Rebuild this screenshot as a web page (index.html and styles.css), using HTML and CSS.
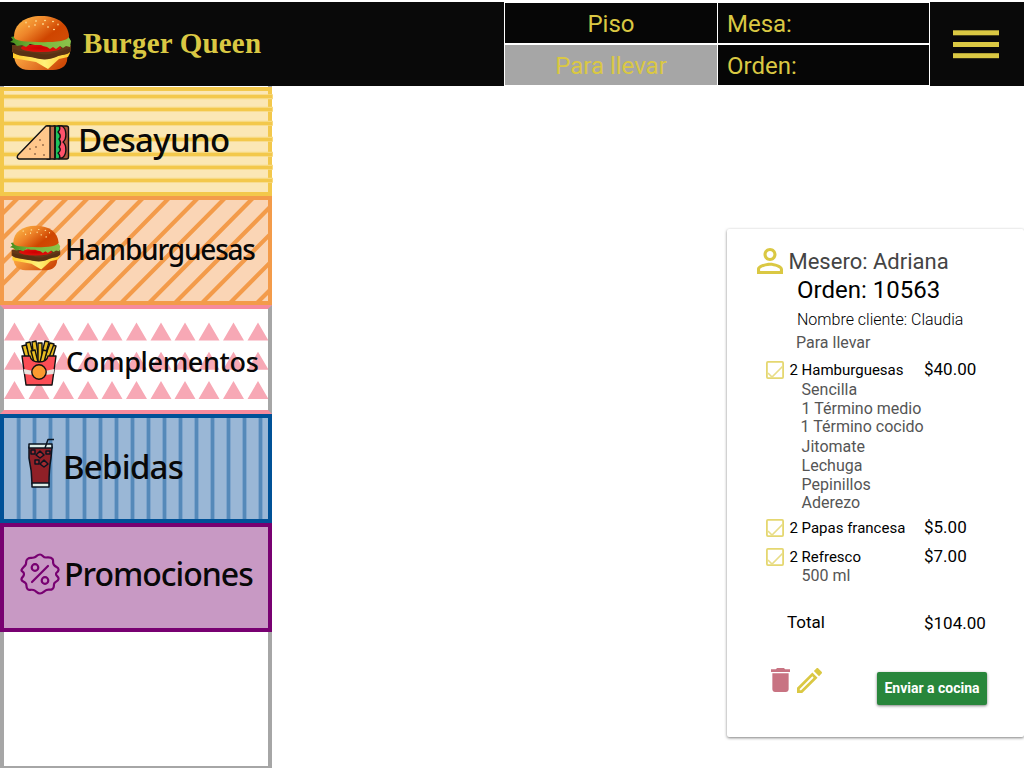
FILE: index.html
```html
<!DOCTYPE html>
<html lang="es">
<head>
<meta charset="utf-8">
<title>Burger Queen</title>
<link rel="stylesheet" href="styles.css">
</head>
<body>
<svg width="0" height="0" class="defs">
  <defs>
    <linearGradient id="bun" x1="0" y1="0" x2="1" y2="0.6"><stop offset="0" stop-color="#ffc04a"/><stop offset="0.45" stop-color="#ee852a"/><stop offset="0.8" stop-color="#cf4500"/><stop offset="1" stop-color="#d14a04"/></linearGradient>
    <linearGradient id="base" x1="0" y1="0" x2="1" y2="0.3"><stop offset="0" stop-color="#ffad43"/><stop offset="0.5" stop-color="#e8802c"/><stop offset="1" stop-color="#cf4b08"/></linearGradient>
    <linearGradient id="leaf"><stop offset="0" stop-color="#438b1c"/><stop offset="0.4" stop-color="#78b63a"/><stop offset="1" stop-color="#8bc34a"/></linearGradient>
    <radialGradient id="tomato"><stop offset="0" stop-color="#cc0000"/><stop offset="1" stop-color="#e0120c"/></radialGradient>
    <linearGradient id="cheese"><stop offset="0" stop-color="#ffc928"/><stop offset="0.55" stop-color="#fff17a"/><stop offset="1" stop-color="#ffc928"/></linearGradient>
    <symbol id="burger" viewBox="0 0 62 54">
      <path fill="url(#base)" d="M4 38H57C59 49 52 54 43 54H19C9 54 4 48 4 38Z"/>
      <path fill="url(#cheese)" d="M3 35L59 34L60 37L58 41L49 43L38 53L26 46L14 44L3 42Z"/>
      <path fill="#653817" d="M2 29H61V35C57 40 52 38 46 41C39 44 33 44 25 42C17 40 6 40 2 36Z"/>
      <path fill="#4c2b10" opacity=".45" d="M3 33C15 37 25 36 31 38C40 40 51 35 61 32V35C55 40 51 38 46 41C37 44 30 44 23 41C15 40 6 40 3 36Z"/>
      <ellipse cx="31" cy="32" rx="20" ry="4" fill="url(#tomato)"/>
      <path fill="url(#leaf)" d="M6 20L58 20L61 25L60 31L56 30L53 32L50 30L46 33L43 31L40 33L37 31L33 30L31 29L25 29L20 28L16 31L12 29L7 30L4 27L0 26L3 24L1 21Z"/>
      <path fill="url(#bun)" d="M4 21C4 8 15 0 31 0C48 0 58 8 59 20C59 22 56 24 51 25C38 27 22 26 11 25C7 24 4 23 4 21Z"/>
      <g fill="#ffe39a"><ellipse cx="26" cy="5" rx="1" ry=".7"/><ellipse cx="35" cy="4.500" rx="1" ry=".7"/><ellipse cx="25" cy="9" rx=".7" ry="1"/><ellipse cx="33" cy="8" rx=".8" ry="1"/><ellipse cx="43" cy="5.500" rx="1" ry=".7"/><ellipse cx="48" cy="8.500" rx=".7" ry="1"/><ellipse cx="19" cy="10.500" rx=".7" ry="1"/><ellipse cx="38" cy="11" rx="1" ry=".7"/><ellipse cx="44" cy="13.500" rx="1" ry=".7"/><ellipse cx="16" cy="6.500" rx=".7" ry="1"/></g>
    </symbol>
    <symbol id="check" viewBox="0 0 18 18">
      <rect x=".9" y=".9" width="16.200" height="16.200" rx="1" fill="none" stroke="#e5d770" stroke-width="1.800"/>
      <path d="M2 12L6 16L16.500 5.500" fill="none" stroke="#e8dd88" stroke-width="1.600"/>
    </symbol>
  </defs>
</svg>

<header class="topbar">
  <div class="brand">
    <svg class="brand-logo"><use href="#burger"/></svg>
    <span class="brand-name">Burger Queen</span>
  </div>
  <div class="service">
    <div class="cell center">Piso</div>
    <div class="cell">Mesa:</div>
    <div class="cell center selected">Para llevar</div>
    <div class="cell">Orden:</div>
  </div>
  <div class="menu">
    <svg width="46" height="29" viewBox="0 0 46 29" fill="#dac843"><rect y=".3" width="46" height="5"/><rect y="12" width="46" height="5"/><rect y="23.200" width="46" height="5"/></svg>
  </div>
</header>

<main class="content">
  <nav class="sidebar">
    <div class="category breakfast">
      <svg class="pattern" viewBox="0 0 269 101">
        <g stroke="#f7d981" stroke-width="5"><path d="M0 5.700H269M0 18.300H269M0 32.300H269M0 48.300H269M0 63.300H269M0 76.300H269M0 89.300H269"/></g>
        <g stroke="#f3c84b" stroke-width="3"><path d="M0 5.500H268M0 18.500H268M0 32.500H268M0 48.500H268M0 63.500H268M0 76.500H268M0 89.500H268"/></g>
      </svg>
      <svg class="icon sandwich" width="54" height="36" viewBox="0 0 54 36">
        <g stroke="#111" stroke-width="1.400" stroke-linejoin="round">
          <rect x="42" y="1" width="10.500" height="33" rx="2" fill="#a9583b"/>
          <path fill="#ff526b" d="M42 1H46C51 4 51 14 47 17C51 20 51 30 46 33H42Z"/>
          <path fill="#1fc45b" d="M38 1H43Q45 4 42 7Q46 11 43 14Q46 18 43 22Q46 25 42 28Q45 31 43 34H38Z"/>
          <path fill="#b9694b" d="M31 1H39V34H31Z"/>
          <path fill="#ffc78b" d="M30 1H34V34H3Q0 33 2 30Z"/>
        </g>
        <path d="M39 2V33" stroke="#111" stroke-width="1.600"/>
        <g fill="#533221"><circle cx="24" cy="15" r=".8"/><circle cx="20" cy="22" r=".8"/><circle cx="27" cy="20" r=".8"/><circle cx="14" cy="24" r=".8"/><circle cx="19" cy="29" r=".8"/><circle cx="28" cy="30" r=".8"/></g>
      </svg>
      <span class="label">Desayuno</span>
    </div>
    <div class="category burgers">
      <svg class="pattern" viewBox="0 0 269 101">
        <path stroke="#f39b4a" stroke-width="4.200" d="M14-2L-4 16M39-2L-4 41M63-2L-4 65M84-2L-18 101M111-2L9 103M139-2L35 103M165-2L62 103M194-2L90 103M221-2L117 103M249-2L145 103M275-2L171 103M302-2L198 103M330-2L226 103M357-2L253 103"/>
      </svg>
      <svg class="icon burger-icon"><use href="#burger"/></svg>
      <span class="label">Hamburguesas</span>
    </div>
    <div class="category sides">
      <svg class="pattern" viewBox="0 0 269 101" fill="#f7a8b5">
        <defs><path id="row" d="M0 18L10.500 0L21 18ZM24.500 18L35 0L45.500 18ZM49 18L59.500 0L70 18ZM73.500 18L84 0L94.500 18ZM97.500 18L108 0L118.500 18ZM122 18L132.500 0L143 18ZM146.500 18L157 0L167.500 18ZM170.500 18L181 0L191.500 18ZM194.500 18L205 0L215.500 18ZM219 18L229.500 0L240 18ZM243.500 18L254 0L264.500 18Z"/></defs>
        <use href="#row" y="13.500"/><use href="#row" y="42.700"/><use href="#row" y="72"/>
      </svg>
      <svg class="icon fries" width="36" height="46" viewBox="0 0 36 46">
        <g stroke="#111" stroke-width="1.400" stroke-linejoin="round">
          <g fill="#e9bd22">
            <path d="M11 2L15 1L18 20H13Z"/><path d="M24 1L28 2L23 20H19Z"/><path d="M17 3H21V22H17Z"/>
            <path d="M1 6L5 5L11 20H5Z"/><path d="M31 5L35 6L31 20H25Z"/><path d="M5 3L9 2L14 21H9Z"/><path d="M29 3L33 4L27 20H23Z"/>
            <path d="M10 11L14 10L17 22H13Z"/><path d="M22 10L26 11L23 22H19Z"/>
          </g>
          <path fill="#fb4d55" d="M1 16H9Q10 22 18 22Q26 22 27 16H35L31 45H5Z"/>
        </g>
        <path fill="#e9e4df" d="M2.700 29L12 31V35L3.500 34ZM33.300 29L24 31V35L32.500 34Z"/>
        <circle cx="18" cy="32" r="7.200" fill="#fa9a30" stroke="#111" stroke-width="1.400"/>
      </svg>
      <span class="label">Complementos</span>
    </div>
    <div class="category drinks">
      <svg class="pattern" viewBox="0 0 269 101">
        <g stroke="#75a0ca" stroke-width="4.500"><path d="M14.700 0V101M30.500 0V101M46.500 0V101M63.500 0V101M80.500 0V101M96.500 0V101M112.500 0V101M128.500 0V101M144.500 0V101M160.500 0V101M176.500 0V101M192.500 0V101M208.500 0V101M224.500 0V101M240.500 0V101M256.500 0V101"/></g>
        <g stroke="#5589b9" stroke-width="3"><path d="M14.700 0V101M30.500 0V101M46.500 0V101M63.500 0V101M80.500 0V101M96.500 0V101M112.500 0V101M128.500 0V101M144.500 0V101M160.500 0V101M176.500 0V101M192.500 0V101M208.500 0V101M224.500 0V101M240.500 0V101M256.500 0V101"/></g>
      </svg>
      <svg class="icon soda" width="28" height="50" viewBox="0 0 28 50">
        <g stroke="#0b1420" stroke-width="1.500" stroke-linejoin="round">
          <path fill="#8f2027" d="M2 9H25L24 20C22 31 22 39 22 46H5C5 38 4 29 2 20Z"/>
          <path fill="#dfeee8" d="M2 6H25V10H2Z"/><path fill="#dfeee8" d="M5 45H22V49H5Z"/>
          <path fill="none" d="M18 10L21 1.500H27"/>
          <g fill="#a22b30"><path d="M13 13L17 17L13 20L9 17Z"/><path d="M17 22L21 26L17 29L13 26Z"/><path d="M4 12H8V16H4ZM19 13H23V16H19ZM8 22H12V26H8Z"/></g>
        </g>
      </svg>
      <span class="label">Bebidas</span>
    </div>
    <div class="category promos">
      <svg class="icon badge" width="40" height="42" viewBox="0 0 40 42" fill="none" stroke="#780071" stroke-width="2.200" stroke-linecap="round" stroke-linejoin="round">
        <path d="M20 1.500C23 1.500 22.500 4.500 26 4.500S31 4 32.500 6S32 9.500 34 12S39 14 38.500 17S36 18.500 36 21S39 23.500 38.500 26S36 28 34.500 30S35 34.500 32.500 36S29 36 26.500 37S23 40.500 20 40.500S16.500 38 13.500 37S9.500 38 7.500 36S7.500 32 5.500 30S1 28.500 1.500 26S4 24 4 21S1 19 1.500 17S4 14 5.500 12S5 8 7.500 6S11 5.500 14 4.500S17 1.500 20 1.500Z"/>
        <circle cx="15" cy="14.500" r="3.300"/><circle cx="25" cy="27.500" r="3.300"/><path d="M28 13L12 29"/>
      </svg>
      <span class="label">Promociones</span>
    </div>
  </nav>

  <section class="ticket">
    <div class="waiter">
      <svg width="26" height="26" viewBox="4 4 16 16" fill="#dac843"><path d="M12 5.900c1.160 0 2.100.94 2.100 2.100s-.94 2.100-2.100 2.100S9.900 9.160 9.900 8s.94-2.100 2.100-2.100m0 9c2.970 0 6.100 1.460 6.100 2.100v1.100H5.900V17c0-.64 3.130-2.100 6.100-2.100M12 4C9.790 4 8 5.790 8 8s1.790 4 4 4 4-1.790 4-4-1.790-4-4-4zm0 9c-2.670 0-8 1.340-8 4v3h16v-3c0-2.660-5.330-4-8-4z"/></svg>
      <span class="waiter-name">Mesero: Adriana</span>
    </div>
    <div class="order-number">Orden: 10563</div>
    <div class="customer">Nombre cliente: Claudia</div>
    <div class="order-type">Para llevar</div>

    <div class="item"><svg class="check"><use href="#check"/></svg><span class="item-name">2 Hamburguesas</span><span class="price">$40.00</span></div>
    <ul class="details">
      <li>Sencilla</li>
      <li>1 Término medio</li>
      <li class="tight outdent">1 Término cocido</li>
      <li class="loose">Jitomate</li>
      <li>Lechuga</li>
      <li>Pepinillos</li>
      <li class="tight">Aderezo</li>
    </ul>
    <div class="item fries-item"><svg class="check"><use href="#check"/></svg><span class="item-name">2 Papas francesa</span><span class="price">$5.00</span></div>
    <div class="item soda-item"><svg class="check"><use href="#check"/></svg><span class="item-name">2 Refresco</span><span class="price">$7.00</span></div>
    <ul class="details size"><li>500 ml</li></ul>
    <div class="total"><span class="total-label">Total</span><span class="price">$104.00</span></div>
    <div class="actions">
      <svg class="trash" width="19" height="24" viewBox="5 3 14 18" preserveAspectRatio="none" fill="#c87382"><path d="M6 19c0 1.100.9 2 2 2h8c1.100 0 2-.9 2-2V7H6v12zM19 4h-3.500l-1-1h-5l-1 1H5v2h14V4z"/></svg>
      <svg class="pencil" width="25" height="25" viewBox="3 3 18 18" fill="#dac843"><path d="M14.060 9.020l.92.920L5.920 19H5v-.92l9.060-9.060M17.660 3c-.25 0-.51.1-.7.290l-1.830 1.830 3.750 3.750 1.830-1.830c.39-.39.39-1.020 0-1.410l-2.340-2.340c-.2-.2-.45-.29-.71-.29zm-3.600 3.190L3 17.250V21h3.750L17.810 9.940l-3.750-3.750z"/></svg>
      <button class="send">Enviar a cocina</button>
    </div>
  </section>
</main>
</body>
</html>
```
FILE: styles.css
```css
* { box-sizing: border-box; }
body { margin: 0; width: 1024px; height: 768px; overflow: hidden; background: #fff; font-family: Roboto, sans-serif; }
.defs { position: absolute; }

.topbar { display: flex; height: 84px; margin-top: 2px; background: #090909; }
.brand { display: flex; align-items: center; width: 504px; padding: 0 0 2px 10px; }
.brand-logo { width: 62px; height: 54px; }
.brand-name { margin-left: 11px; font: bold 29px "Liberation Serif", serif; letter-spacing: 0.2px; color: #dac843; white-space: nowrap; }
.service { display: grid; grid-template-columns: 212px 211px; grid-template-rows: 40px 40px; gap: 2px 1px; width: 426px; padding: 1px 0 1px 1px; border-right: 1px solid #fff; background: #fff; }
.cell { display: flex; align-items: center; padding: 2px 0 0 9px; background: #060606; color: #dac843; font-size: 24px; }
.center { justify-content: center; padding-left: 0; }
.selected { background: #a6a6a6; }
.menu { display: flex; align-items: center; padding-left: 23px; }

.content { display: flex; height: 682px; }
.sidebar { flex: none; width: 272px; padding-top: 1px; background: linear-gradient(#a6a6a6, #a6a6a6) 0 0 / 4px 100% no-repeat, linear-gradient(#a6a6a6, #a6a6a6) 268px 0 / 4px 100% no-repeat, linear-gradient(#a6a6a6, #a6a6a6) 0 100% / 100% 2px no-repeat; }
.category { position: relative; display: flex; align-items: center; width: 272px; height: 109px; border: 4px solid; }
.pattern { position: absolute; top: 0; left: 0; width: 269px; height: 101px; }
.icon { position: relative; flex: none; }
.label { position: relative; font-family: "Noto Sans", "Open Sans", sans-serif; font-weight: 500; color: #080808; white-space: nowrap; line-height: 40px; }
.breakfast { border-color: #f3c84b; background: #fbe7b5; }
.breakfast .label { margin: -3px 0 0 8px; font-size: 33px; letter-spacing: -0.7px; }
.sandwich { margin: 2px 0 0 12px; }
.burgers { overflow: hidden; border-color: #f39b4a; background: #fad5b5; }
.burger-icon { width: 51px; height: 46px; margin: -5px 0 0 6px; }
.burgers .label { margin: -3px 0 0 4px; font-size: 28px; letter-spacing: -1.2px; }
.sides { overflow: hidden; border-color: #f68b9d #a6a6a6; background: #fff; }
.fries { margin: 6px 0 0 17px; }
.sides .label { margin: 4px 0 0 9px; font-size: 27px; letter-spacing: -0.35px; }
.drinks { overflow: hidden; border-color: #005197; background: #9ab7d6; }
.soda { margin: -11px 0 0 23px; }
.drinks .label { margin: -3px 0 0 8px; font-size: 33px; letter-spacing: -0.75px; }
.promos { border-color: #780071; background: #c899c4; }
.badge { margin: -7px 0 0 16px; }
.promos .label { margin: -7px 0 0 4px; font-size: 32px; letter-spacing: -1px; }

.ticket { flex: none; width: 297px; height: 508px; margin: 143px 0 0 455px; padding-top: 20px; border-radius: 2px; background: #fff; box-shadow: 0 1px 3px rgba(0, 0, 0, .5); white-space: nowrap; }
.waiter { display: flex; height: 24px; padding-left: 30px; line-height: 26px; }
.waiter svg { margin-top: -1px; }
.waiter-name { margin-left: 5.5px; font-size: 22px; color: #444; }
.order-number { margin-top: 2px; padding-left: 70px; font-size: 24px; line-height: 30px; color: #000; }
.customer { margin-top: 3px; padding-left: 70px; font-size: 16px; font-weight: 300; line-height: 24px; color: #000; }
.order-type { margin-top: 1px; padding-left: 69px; font-size: 16px; line-height: 20px; color: #555; }
.item, .total { display: grid; grid-template-columns: 24px 134px auto; height: 20px; padding-left: 39px; line-height: 20px; color: #000; }
.item { margin-top: 7px; }
.fries-item { margin-top: 6px; }
.soda-item { margin-top: 9px; }
.check { width: 18px; height: 18px; margin-top: 1px; }
.item-name { margin-left: -0.6px; font-size: 15px; }
.price { font-size: 17px; }
.item .price { margin-top: -1px; }
.details { margin: 0; padding: 0 0 0 74.6px; list-style: none; font-size: 16px; line-height: 19px; color: #555; }
.tight, .size { margin-top: -1px; }
.outdent { margin-left: -1px; }
.loose { margin-top: 1px; }
.total { grid-template-columns: 137px auto; margin-top: 27px; padding-left: 60px; }
.total-label { font-size: 17px; }
.total .price { margin-top: 1px; }
.actions { display: flex; margin-top: 36px; padding-left: 44px; }
.pencil { margin-left: 7px; }
.send { width: 110px; height: 33px; margin: 4px 0 0 55px; padding: 0 0 2px; border: 0; border-radius: 2px; background: #28863b; box-shadow: 0 1px 3px rgba(0, 0, 0, .5); color: #fff; font: bold 14px Roboto, sans-serif; }
```
